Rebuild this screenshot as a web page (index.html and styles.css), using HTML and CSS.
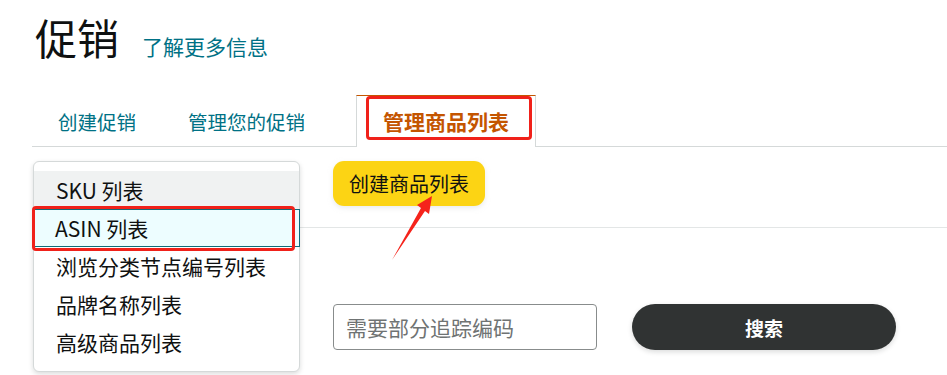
FILE: index.html
```html
<!DOCTYPE html>
<html lang="zh-CN">
<head>
<meta charset="utf-8">
<title>促销</title>
<link rel="stylesheet" href="styles.css">
</head>
<body>
<div class="header">
  <h1 class="title">促销</h1>
  <a class="learn" href="#">了解更多信息</a>
</div>
<div class="tabs">
  <div class="tab">创建促销</div>
  <div class="tab">管理您的促销</div>
  <div class="tab active">管理商品列表<span class="mark mark-tab"></span></div>
</div>
<div class="content">
  <div class="row-create">
    <div class="select-anchor">
      <ul class="dropdown">
        <li class="opt opt-hover">SKU 列表</li>
        <li class="opt opt-selected">ASIN 列表<span class="mark mark-opt"></span></li>
        <li class="opt">浏览分类节点编号列表</li>
        <li class="opt">品牌名称列表</li>
        <li class="opt">高级商品列表</li>
      </ul>
    </div>
    <button class="btn-create">创建商品列表</button>
    <svg class="arrow" width="50" height="70" viewBox="0 0 50 70">
      <polygon points="2,66 35,17 39,20 42,2 27,11 31,14" fill="#f5231b"/>
    </svg>
  </div>
  <div class="row-search">
    <input class="search-input" type="text" placeholder="需要部分追踪编码">
    <button class="btn-search">搜索</button>
  </div>
</div>
</body>
</html>
```

FILE: styles.css
```css
* { box-sizing: border-box; }
html, body { min-height: 375px; }
body {
  margin: 0;
  padding-bottom: 40px;
  background: #fff;
  font-family: "Noto Sans CJK SC", "Noto Sans", sans-serif;
  color: #0f1111;
}
.header {
  display: flex;
  align-items: baseline;
  padding: 12px 0 0 35px;
}
.title {
  margin: 0;
  font-size: 42px;
  font-weight: 400;
  line-height: 50px;
}
.learn {
  margin-left: 23px;
  font-size: 21px;
  color: #007185;
  text-decoration: none;
}
.tabs {
  display: flex;
  margin: 33px 0 0 32px;
  border-bottom: 1px solid #d5d9d9;
  height: 52px;
}
.tab {
  padding: 0 26px;
  font-size: 19.5px;
  line-height: 54px;
  color: #007185;
}
.tab.active {
  position: relative;
  margin-left: 25px;
  margin-bottom: -1px;
  height: 52px;
  background: #fff;
  border: 1px solid #d5d9d9;
  border-top: 1px solid #c45500;
  border-bottom: none;
  color: #c45500;
  font-weight: 700;
  font-size: 21px;
  line-height: 50px;
}
.mark {
  position: absolute;
  border: 3px solid #f0211a;
  border-radius: 4px;
  pointer-events: none;
}
.mark-tab {
  left: 9px;
  top: 0;
  width: 166px;
  height: 44px;
}
.content {
  margin-left: 32px;
}
.row-create {
  position: relative;
  display: flex;
  gap: 33px;
  padding: 14px 0 21px 1px;
  border-bottom: 1px solid #e3e6e6;
}
.select-anchor {
  position: relative;
  width: 267px;
  height: 45px;
}
.dropdown {
  position: absolute;
  top: 0;
  left: 0;
  z-index: 2;
  width: 267px;
  margin: 0;
  padding: 9px 0 10px;
  list-style: none;
  background: #fff;
  border: 1px solid #d5d9d9;
  border-radius: 6px;
  box-shadow: 0 2px 5px rgba(15, 17, 17, 0.15);
}
.opt {
  position: relative;
  height: 38px;
  padding-left: 22px;
  font-size: 21px;
  line-height: 38px;
  color: #0f1111;
}
.opt-hover { background: #f0f2f2; }
.opt-selected {
  background: #edfdff;
  border: 1px solid #0f6b7a;
  line-height: 36px;
  padding-left: 21px;
  margin-left: -1px;
  margin-right: -1px;
}
.mark-opt {
  left: -2px;
  top: -4px;
  width: 263px;
  height: 45px;
}
.btn-create {
  height: 45px;
  padding: 0 16px;
  border: none;
  border-radius: 11px;
  background: #fcd414;
  color: #0f1111;
  font-family: inherit;
  font-size: 20px;
  box-shadow: 0 2px 5px rgba(213, 217, 217, 0.5);
}
.arrow {
  position: absolute;
  left: 358px;
  top: 47px;
}
.row-search {
  display: flex;
  gap: 35px;
  margin-top: 76px;
  padding-left: 301px;
}
.search-input {
  width: 264px;
  height: 46px;
  padding: 0 12px;
  border: 1px solid #888c8c;
  border-radius: 4px;
  font-family: inherit;
  font-size: 21px;
  color: #0f1111;
}
.search-input::placeholder { color: #6f7373; }
.btn-search {
  width: 264px;
  height: 46px;
  border: none;
  border-radius: 23px;
  background: #303333;
  color: #fff;
  font-family: inherit;
  font-size: 19px;
  font-weight: 700;
  box-shadow: 0 2px 5px rgba(15, 17, 17, 0.15);
}
```
